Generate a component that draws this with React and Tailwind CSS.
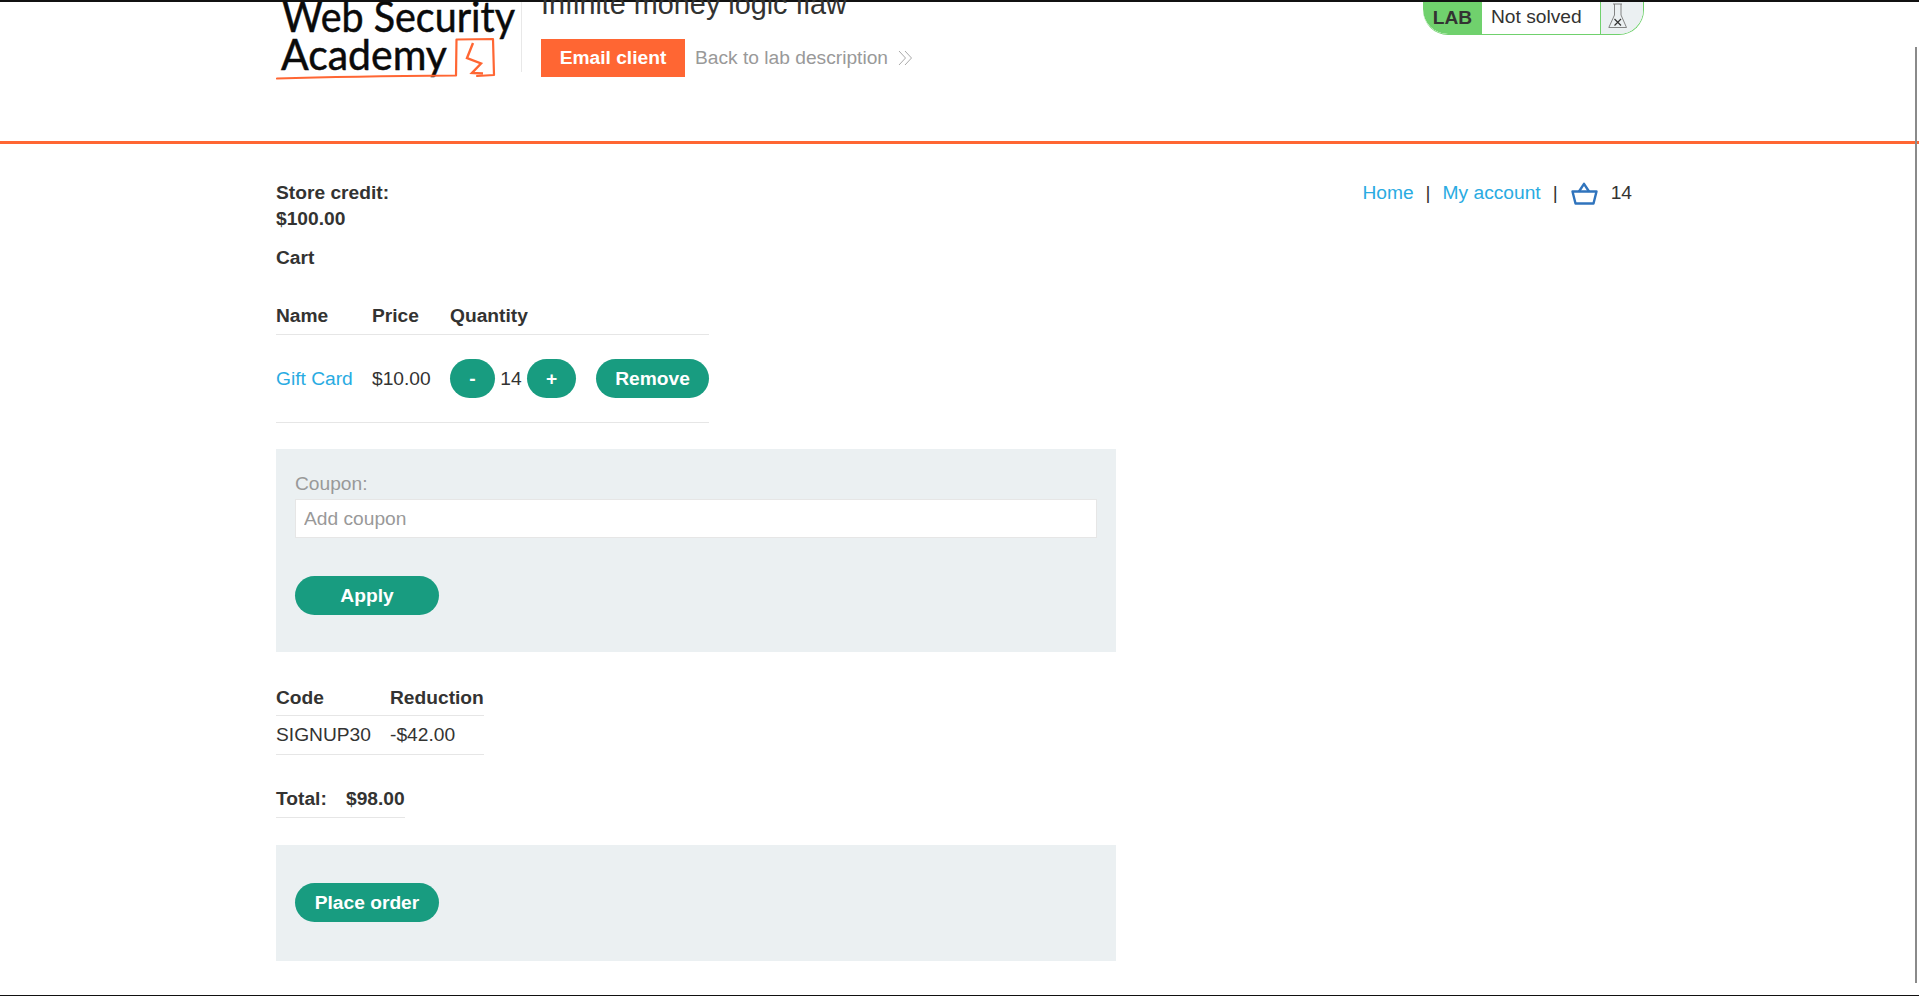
import React from "react";

const font = { fontFamily: '"Liberation Sans", Arial, sans-serif' };

function Logo() {
  return (
    <svg width="245" height="80" viewBox="276 2 245 80" className="block shrink-0">
      <text x="282" y="32" fontFamily="Lato, sans-serif" fontSize="42" fill="#0a0a0a" stroke="#0a0a0a" strokeWidth="0.5" textLength="233" lengthAdjust="spacingAndGlyphs">Web Security</text>
      <text x="281" y="69.5" fontFamily="Lato, sans-serif" fontSize="42" fill="#0a0a0a" stroke="#0a0a0a" strokeWidth="0.5" textLength="166" lengthAdjust="spacingAndGlyphs">Academy</text>
      <path d="M277 78.5 C 330 77, 400 76, 456 75.5 L 456.5 39.5 L 493 39 L 494 75 L 477 76" fill="none" stroke="#ff6633" strokeWidth="2.2" strokeLinejoin="round" strokeLinecap="round" />
      <path d="M473 43 L 467 58 L 481 63.5 L 472 73 L 483 73.5" fill="none" stroke="#ff6633" strokeWidth="2.4" strokeLinejoin="miter" />
    </svg>
  );
}

function Flask() {
  return (
    <svg width="20" height="26" viewBox="0 0 20 26" fill="none" stroke="#777" strokeWidth="0.9">
      <path d="M5 1 H14 M6.5 1 V12 L0.8 24.5 H18.5 L13 12 V1" />
      <path d="M6.5 16 L13 22.5 M13 16 L6.5 22.5" stroke="#333" strokeWidth="1.2" />
    </svg>
  );
}

function Basket() {
  return (
    <svg width="27" height="23" viewBox="0 0 27 23" fill="none" stroke="#3074bd" strokeWidth="2.4" strokeLinejoin="round" className="block">
      <path d="M1.5 9.5 H25.5 L22.5 21.5 H4.5 Z" />
      <path d="M8 9.5 L13 1.8 L18 9.5" />
    </svg>
  );
}

function Chevrons() {
  return (
    <svg width="15" height="16" viewBox="0 0 15 16" fill="none" stroke="#aaa" strokeWidth="1" className="block">
      <path d="M1 1 L7.5 8 L1 15 M7 1 L13.5 8 L7 15" />
    </svg>
  );
}

const pill = "bg-[#189c80] text-white font-bold rounded-[20px] flex items-center justify-center";

export default function App() {
  return (
    <div style={font} className="relative h-[996px] w-[1919px] overflow-hidden bg-white text-[19.2px] leading-[26px] text-[#333332]">
      <div className="h-[2px] bg-[#111]" />

      <header className="h-[142px] border-b-[3px] border-[#ff6633] pl-[276px]">
        <div className="flex w-[1368px] items-start">
          <Logo />
          <div className="h-[70px] w-px bg-[#e8e8e8]" />
          <div className="ml-[19px]">
            <div className="-mt-[12px] h-[29px] whitespace-nowrap text-[28.8px] leading-[29px]">Infinite money logic flaw</div>
            <div className="mt-[20px] flex items-center">
              <div className="flex h-[38px] w-[144px] items-center justify-center bg-[#ff6633] font-bold text-white">Email client</div>
              <span className="ml-[10px] whitespace-nowrap text-[#999]">Back to lab description</span>
              <span className="ml-[10px]"><Chevrons /></span>
            </div>
          </div>
          <div className="ml-auto flex h-[33px] w-[221px] overflow-hidden rounded-b-[25px] border-b border-r border-[#70d16d]">
            <div className="flex w-[59px] items-center justify-center rounded-bl-[25px] bg-[#70d16d] font-bold">LAB</div>
            <div className="flex w-[118px] items-center pl-[9px] pb-[2px]">Not solved</div>
            <div className="flex flex-1 items-start border-l border-[#70d16d] bg-[#ebf0f2] pl-[7px] pt-[1px]"><Flask /></div>
          </div>
        </div>
      </header>

      <main className="pl-[276px]">
        <div className="flex w-[1367px] items-start justify-between pt-[36px]">
          <div className="font-bold">
            <div>Store credit:</div>
            <div>$100.00</div>
          </div>
          <nav className="flex items-center">
            <span className="text-[#29abe2]">Home</span>
            <span className="ml-[12px]">|</span>
            <span className="ml-[12px] text-[#29abe2]">My account</span>
            <span className="ml-[12px]">|</span>
            <span className="ml-[13px]"><Basket /></span>
            <span className="ml-[13px] mr-[11px]">14</span>
          </nav>
        </div>

        <div className="mt-[13px] font-bold">Cart</div>

        <div className="mt-[28px] w-[433px]">
          <div className="flex h-[36px] items-start border-b border-[#e6e6e6] pt-[4px] font-bold">
            <span className="w-[96px]">Name</span>
            <span className="w-[78px]">Price</span>
            <span>Quantity</span>
          </div>
          <div className="flex h-[88px] items-center border-b border-[#e6e6e6]">
            <span className="w-[96px] text-[#29abe2]">Gift Card</span>
            <span className="w-[78px]">$10.00</span>
            <div className={`${pill} h-[39px] w-[45px]`}>-</div>
            <span className="w-[32px] text-center">14</span>
            <div className={`${pill} h-[39px] w-[49px]`}>+</div>
            <div className={`${pill} ml-[20px] h-[39px] w-[113px]`}>Remove</div>
          </div>
        </div>

        <section className="mt-[26px] h-[203px] w-[840px] bg-[#ebf0f2] px-[19px] pt-[22px]">
          <div className="text-[#999]">Coupon:</div>
          <input
            readOnly
            placeholder="Add coupon"
            style={font}
            className="mt-[2px] block h-[39px] w-[802px] border border-[#e6e6e6] bg-white px-[8px] text-[19.2px] placeholder:text-[#999]"
          />
          <div className={`${pill} mt-[38px] h-[39px] w-[144px]`}>Apply</div>
        </section>

        <div className="mt-[33px] w-[208px]">
          <div className="flex h-[31px] items-start border-b border-[#e6e6e6] font-bold">
            <span className="w-[114px]">Code</span>
            <span>Reduction</span>
          </div>
          <div className="flex h-[39px] items-center border-b border-[#e6e6e6]">
            <span className="w-[114px]">SIGNUP30</span>
            <span>-$42.00</span>
          </div>
        </div>

        <div className="mt-[31px] flex h-[32px] w-[129px] items-start border-b border-[#e6e6e6] font-bold">
          <span className="w-[70px]">Total:</span>
          <span>$98.00</span>
        </div>

        <section className="mt-[27px] h-[116px] w-[840px] bg-[#ebf0f2] px-[19px] pt-[38px]">
          <div className={`${pill} h-[39px] w-[144px]`}>Place order</div>
        </section>
      </main>

      <div className="absolute right-[2px] top-[47px] h-[936px] w-[2px] bg-[#8a8a8a]" />
      <div className="absolute bottom-0 left-0 h-[1px] w-full bg-[#111]" />
    </div>
  );
}
